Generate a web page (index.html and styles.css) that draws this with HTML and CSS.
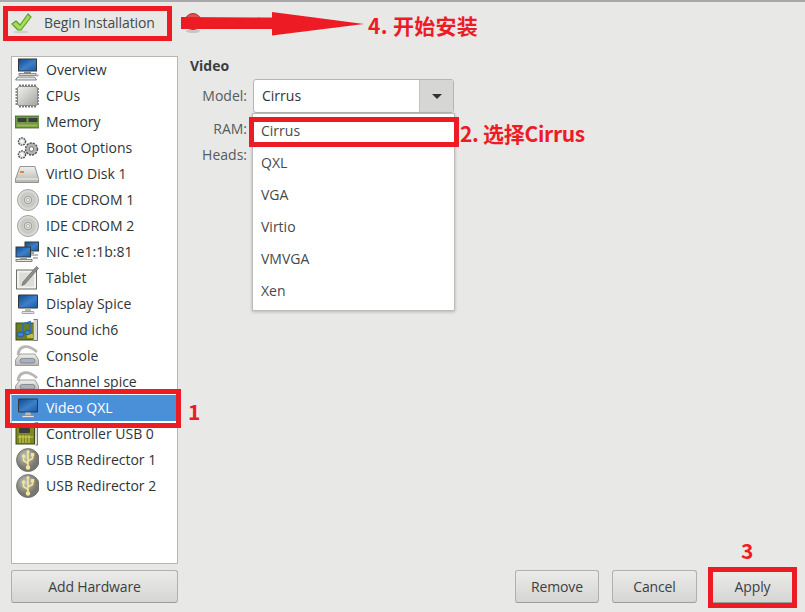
FILE: index.html
```html
<!DOCTYPE html>
<html lang="en">
<head>
<meta charset="utf-8">
<title>Video</title>
<link rel="stylesheet" href="styles.css">
</head>
<body>
<svg class="defs" aria-hidden="true">
  <defs>
    <linearGradient id="scr" x1="0" y1="0" x2="1" y2="1"><stop offset="0" stop-color="#0f4c94"/><stop offset=".55" stop-color="#3d7fc8"/><stop offset="1" stop-color="#1c5ca8"/></linearGradient>
    <linearGradient id="metal" x1="0" y1="0" x2="1" y2="1"><stop offset="0" stop-color="#f2f2f0"/><stop offset="1" stop-color="#a4a4a0"/></linearGradient>
    <linearGradient id="lite" x1="0" y1="0" x2="0" y2="1"><stop offset="0" stop-color="#f0f0ee"/><stop offset="1" stop-color="#b4b4b0"/></linearGradient>
    <radialGradient id="disc"><stop offset="0" stop-color="#f4f4f2"/><stop offset=".6" stop-color="#c4c4c0"/><stop offset="1" stop-color="#e6e6e4"/></radialGradient>
    <radialGradient id="ball" cx=".4" cy=".35"><stop offset="0" stop-color="#c8c8c4"/><stop offset="1" stop-color="#77776f"/></radialGradient>
    <symbol id="i-monitor" viewBox="0 0 24 24">
      <rect x="3" y="2.500" width="20" height="14" rx="1" fill="#33383a"/>
      <rect x="4" y="3.500" width="18" height="12" fill="url(#scr)"/>
      <path d="M10.500 16.500h5l.6 3h-6.200z" fill="#b8b8b4"/>
      <rect x="7" y="19.500" width="12" height="2" rx=".5" fill="#e4e4e2" stroke="#77777a" stroke-width=".6"/>
    </symbol>
    <symbol id="i-overview" viewBox="0 0 24 24">
      <rect x="3" y="0.500" width="19" height="13" fill="#33383a"/>
      <rect x="4" y="1.500" width="17" height="11" fill="url(#scr)"/>
      <path d="M9 13.500h7v2H9z" fill="#8c8c88"/>
      <rect x="4" y="15.500" width="17" height="2" fill="#d4d4d0" stroke="#55595a" stroke-width=".6"/>
      <path d="M2.500 19h17l2 3h-21z" fill="#e4e4e2" stroke="#55595a" stroke-width=".7"/>
      <path d="M21 16.500h2.500v2H21z" fill="#aaa"/>
    </symbol>
    <symbol id="i-cpu" viewBox="0 0 24 24">
      <path d="M5 .5v3M8 .5v3M11 .5v3M14 .5v3M17 .5v3M20 .5v3M5 20.500v3M8 20.500v3M11 20.500v3M14 20.500v3M17 20.500v3M20 20.500v3M.5 5h3M.5 8h3M.5 11h3M.5 14h3M.5 17h3M.5 20h3M21.500 5h2.500M21.500 8h2.500M21.500 11h2.500M21.500 14h2.500M21.500 17h2.500M21.500 20h2.500" stroke="#5f6364" stroke-width="1.700"/>
      <rect x="2.500" y="2.500" width="20" height="19" rx="2" fill="url(#metal)" stroke="#8a8a86"/>
    </symbol>
    <symbol id="i-mem" viewBox="0 0 24 24">
      <rect x="0.500" y="6" width="24" height="12" fill="#6d9a4a" stroke="#3f5f2e" stroke-width=".8"/>
      <rect x="2.500" y="8" width="9" height="4" fill="#3b3d3a"/>
      <rect x="13.500" y="8" width="9" height="4" fill="#3b3d3a"/>
      <path d="M2.500 15.500h20" stroke="#d7cc5c" stroke-width="2" stroke-dasharray="1 1"/>
    </symbol>
    <symbol id="i-gear" viewBox="0 0 24 24">
      <g fill="#e4e4e0" stroke="#4e5254" stroke-width="1.400">
        <circle cx="7" cy="5.500" r="3.600" stroke-dasharray="1.800 .8"/>
        <circle cx="7" cy="18.500" r="3.600" stroke-dasharray="1.800 .8"/>
        <circle cx="16.500" cy="13" r="6" fill="#b4b4b0" stroke-dasharray="2.200 1"/>
      </g>
      <circle cx="16.500" cy="13" r="2.200" fill="#fff" stroke="#4e5254" stroke-width=".7"/>
      <circle cx="7" cy="5.500" r="1.300" fill="#fff"/>
      <circle cx="7" cy="18.500" r="1.300" fill="#fff"/>
    </symbol>
    <symbol id="i-disk" viewBox="0 0 24 24">
      <path d="M5 4.500h15l3.500 12.500v3.500H.5V17z" fill="url(#lite)" stroke="#8a8a86" stroke-width=".9"/>
      <path d="M1 17h22.500" stroke="#fff" stroke-width=".8"/>
      <rect x="5" y="9" width="4" height="2" fill="#e8843a"/>
    </symbol>
    <symbol id="i-cd" viewBox="0 0 24 24">
      <circle cx="13" cy="12" r="10.500" fill="url(#disc)" stroke="#96968f" stroke-width=".9"/>
      <circle cx="13" cy="12" r="3.800" fill="#dcdcd8" stroke="#8a8a86" stroke-width=".8"/>
      <circle cx="13" cy="12" r="1.500" fill="#fff" stroke="#8a8a86" stroke-width=".6"/>
    </symbol>
    <symbol id="i-nic" viewBox="0 0 24 24">
      <rect x="10" y="2" width="13.500" height="9" fill="url(#scr)" stroke="#33383a"/>
      <path d="M14 11h5v3h-5z" fill="#a0a09c"/>
      <rect x="1" y="7" width="14.500" height="10" fill="url(#scr)" stroke="#33383a"/>
      <rect x="5" y="17" width="7" height="2" fill="#a0a09c"/>
      <rect x="1" y="19.500" width="16" height="2" fill="#e4e4e2" stroke="#55595a" stroke-width=".7"/>
      <path d="M16 15h7M18 18h5" stroke="#77777a"/>
    </symbol>
    <symbol id="i-tablet" viewBox="0 0 24 24">
      <rect x="1.500" y="4" width="20" height="19" fill="#f2f2f0" stroke="#6e6e6a"/>
      <rect x="4" y="6.500" width="15" height="14" fill="#dcdcd8"/>
      <path d="M21.500 .5l2 1.800L10 18l-3 1.400L8 16z" fill="#8e8e8a" stroke="#55595a" stroke-width=".6"/>
    </symbol>
    <symbol id="i-sound" viewBox="0 0 24 24">
      <rect x="1" y="5" width="17.500" height="17" fill="#6f7d22" stroke="#3f4a14"/>
      <path d="M18.500 1.500h4v21h-4" fill="#d8d8d4" stroke="#77777a"/>
      <rect x="12" y="16" width="6" height="4" fill="#c8b838"/>
      <path d="M8 16V6l7-2v10" fill="none" stroke="#2f6fc0" stroke-width="1.800"/>
      <ellipse cx="5.500" cy="16.500" rx="3.400" ry="2.400" fill="#3b82d0" stroke="#1c4f90" stroke-width=".7"/>
      <ellipse cx="12.500" cy="14.500" rx="3.200" ry="2.200" fill="#3b82d0" stroke="#1c4f90" stroke-width=".7"/>
    </symbol>
    <symbol id="i-serial" viewBox="0 0 24 24">
      <path d="M3 11C4 1 13 0 22 8" fill="none" stroke="#b6b6b2" stroke-width="2.800"/>
      <path d="M5 10h15l3.500 6v5.500H.5V16z" fill="url(#lite)" stroke="#8a8a86" stroke-width=".8"/>
      <rect x="5" y="14.500" width="15" height="4.500" rx="2.200" fill="#a8b2c2" stroke="#6a6a66" stroke-width=".6"/>
    </symbol>
    <symbol id="i-usbcard" viewBox="0 0 24 24">
      <path d="M19.500 0h3v23h-2" fill="#d8d8d4" stroke="#77777a"/>
      <rect x="1" y="4" width="18.500" height="18" fill="#7a8a1e" stroke="#3f4a14"/>
      <rect x="4" y="6" width="11" height="5" rx="1" fill="#3b3d3a"/>
      <path d="M3 15h15M5 13v8M8 13v8M11 13v8M14 13v8" stroke="#d7cc5c" stroke-width="1.100"/>
    </symbol>
    <symbol id="i-usb" viewBox="0 0 24 24">
      <circle cx="13" cy="12" r="11.500" fill="url(#ball)" stroke="#66665f" stroke-width=".7"/>
      <path d="M13 3v15M13 15.500l-4.500-3V9M13 13l4.500-2.500V7.500" fill="none" stroke="#f3e594" stroke-width="1.700"/>
      <path d="M13 1.500l2.200 3h-4.400z" fill="#f3e594"/>
      <circle cx="13" cy="19.500" r="2.200" fill="#f3e594"/>
      <circle cx="8.500" cy="8" r="1.700" fill="#f3e594"/>
      <rect x="15.800" y="5" width="3.400" height="3.400" fill="#f3e594"/>
    </symbol>
  </defs>
</svg>
<div class="window">
  <div class="toolbar">
    <div class="tool tool-begin">
      <svg class="tool-icon" viewBox="0 0 24 24"><ellipse cx="11" cy="22" rx="8" ry="1.500" fill="#cfcfcd"/><path d="M2 14l4-3 4 4 8-11 3 3-10 13H8z" fill="#a5dc5c" stroke="#5e9c2a" stroke-width="1.200" stroke-linejoin="round"/></svg>
      <span>Begin Installation</span>
    </div>
    <div class="tool tool-cancel">
      <svg class="tool-icon" viewBox="0 0 24 24"><ellipse cx="10" cy="21" rx="7" ry="2" fill="#c6c6c4"/><circle cx="10" cy="11.500" r="8" fill="#e0504e" stroke="#b03232"/></svg>
      <span>Cancel Installation</span>
    </div>
  </div>
  <div class="main">
    <div class="side">
      <ul class="list">
        <li class="row"><svg class="ic"><use href="#i-overview"/></svg>Overview</li>
        <li class="row"><svg class="ic"><use href="#i-cpu"/></svg>CPUs</li>
        <li class="row"><svg class="ic"><use href="#i-mem"/></svg>Memory</li>
        <li class="row"><svg class="ic"><use href="#i-gear"/></svg>Boot Options</li>
        <li class="row"><svg class="ic"><use href="#i-disk"/></svg>VirtIO Disk 1</li>
        <li class="row"><svg class="ic"><use href="#i-cd"/></svg>IDE CDROM 1</li>
        <li class="row"><svg class="ic"><use href="#i-cd"/></svg>IDE CDROM 2</li>
        <li class="row"><svg class="ic"><use href="#i-nic"/></svg>NIC :e1:1b:81</li>
        <li class="row"><svg class="ic"><use href="#i-tablet"/></svg>Tablet</li>
        <li class="row"><svg class="ic"><use href="#i-monitor"/></svg>Display Spice</li>
        <li class="row"><svg class="ic"><use href="#i-sound"/></svg>Sound ich6</li>
        <li class="row"><svg class="ic"><use href="#i-serial"/></svg>Console</li>
        <li class="row"><svg class="ic"><use href="#i-serial"/></svg>Channel spice</li>
        <li class="row sel"><svg class="ic"><use href="#i-monitor"/></svg>Video QXL</li>
        <li class="row"><svg class="ic"><use href="#i-usbcard"/></svg>Controller USB 0</li>
        <li class="row"><svg class="ic"><use href="#i-usb"/></svg>USB Redirector 1</li>
        <li class="row"><svg class="ic"><use href="#i-usb"/></svg>USB Redirector 2</li>
      </ul>
      <button class="btn btn-add">Add Hardware</button>
    </div>
    <div class="content">
      <div class="panel">
        <div class="title">Video</div>
        <div class="form">
          <div class="label label-model">Model:</div>
          <div class="combo">
            <div class="combo-value">Cirrus</div>
            <div class="combo-arrow"><span class="caret"></span></div>
          </div>
          <div class="label">RAM:</div>
          <div class="label">Heads:</div>
        </div>
        <ul class="popup">
          <li>Cirrus</li>
          <li>QXL</li>
          <li>VGA</li>
          <li>Virtio</li>
          <li>VMVGA</li>
          <li>Xen</li>
        </ul>
      </div>
      <div class="actions">
        <button class="btn btn-remove">Remove</button>
        <button class="btn btn-std">Cancel</button>
        <button class="btn btn-std">Apply</button>
      </div>
    </div>
  </div>
</div>
<div class="mark box-begin"></div>
<div class="mark box-video"></div>
<div class="mark box-cirrus"></div>
<div class="mark box-apply"></div>
<svg class="arrow" viewBox="0 0 184 24"><polygon points="0,5 91,5.500 91,0 183,12 91,23.500 91,17 0,17" fill="#ed1c24"/></svg>
<div class="note note-4">4. 开始安装</div>
<div class="note note-2">2. 选择Cirrus</div>
<div class="note note-1">1</div>
<div class="note note-3">3</div>
</body>
</html>
```
FILE: styles.css
```css
html, body { margin: 0; padding: 0; }
body { position: relative; width: 805px; height: 612px; overflow: hidden; background: #e8e8e7; font-family: "Open Sans", sans-serif; font-size: 14px; color: #2e3436; }
.defs { position: absolute; width: 0; height: 0; }
.window { display: flex; flex-direction: column; height: 612px; border-top: 2px solid #a8a8a8; box-sizing: border-box; }

.toolbar { height: 54px; display: flex; box-sizing: border-box; padding: 0 0 14px 10px; color: #454a4c; }
.tool { display: flex; align-items: center; }
.tool-begin { width: 171px; gap: 10px; letter-spacing: -.1px; }
.tool-cancel { gap: 10px; margin-left: 2px; color: #8a8d8d; }
.tool-icon { width: 24px; height: 24px; }

.main { display: flex; flex: 1; min-height: 0; padding: 0 10px 9px 11px; gap: 12px; }
.side { width: 167px; display: flex; flex-direction: column; gap: 6px; }
.list { flex: 1; margin: 0; padding: 0; list-style: none; background: #fff; border: 1px solid #b6b6b3; }
.row { height: 26px; display: flex; align-items: center; box-sizing: border-box; padding: 0 0 2px 3px; }
.sel { background: #4a90d9; color: #fff; }
.ic { width: 24px; height: 24px; margin: 0 7px 0 0; flex: none; position: relative; top: 1px; }

.content { flex: 1; min-width: 0; display: flex; flex-direction: column; }
.panel { flex: 1; position: relative; }
.title { font-weight: bold; line-height: 19px; margin-bottom: 4px; color: #3b4042; }
.form { display: grid; grid-template-columns: 57px 201px; grid-template-rows: 37px 26px 26px; column-gap: 6px; }
.label { grid-column: 1; text-align: right; line-height: 26px; color: #575b5c; }
.label-model { line-height: 33px; }
.combo { grid-column: 2; grid-row: 1; height: 34px; box-sizing: border-box; display: flex; border: 1px solid #b5b5b2; border-radius: 3px; overflow: hidden; background: #fff; }
.combo-value { flex: 1; padding-left: 8px; line-height: 32px; }
.combo-arrow { width: 33px; background: #d6d6d4; border-left: 1px solid #c2c2bf; display: flex; align-items: center; justify-content: center; }
.caret { width: 0; height: 0; border-style: solid; border-width: 5px 5px 0; border-color: #2e3436 transparent transparent; }
.popup { position: absolute; left: 62px; top: 57px; width: 201px; margin: 0; padding: 2px 0; list-style: none; background: #fff; border: 1px solid #bcbcb9; box-shadow: 0 1px 3px rgba(0,0,0,.22); color: #454a4c; }
.popup li { height: 32px; line-height: 30px; padding-left: 8px; }

.actions { display: flex; justify-content: flex-end; gap: 13px; }
.btn { height: 33px; padding: 0; font: inherit; letter-spacing: -.15px; color: #3b4042; border: 1px solid #b0b0ad; border-bottom-color: #9c9c99; border-radius: 3px; background: linear-gradient(#ebebe9, #d5d5d3); }
.btn-add { width: 167px; flex: none; }
.btn-remove { width: 84px; }
.btn-std { width: 85px; }

.mark { position: absolute; box-sizing: border-box; border: 5px solid #ed1c24; }
.box-begin { left: 3px; top: 6px; width: 169px; height: 35px; }
.box-video { left: 5px; top: 389px; width: 176px; height: 39px; }
.box-cirrus { left: 249px; top: 117px; width: 210px; height: 30px; }
.box-apply { left: 708px; top: 567px; width: 89px; height: 41px; }
.arrow { position: absolute; left: 181px; top: 12px; width: 184px; height: 24px; }
.note { position: absolute; font: bold 21px/26px "Noto Sans CJK SC", sans-serif; color: #ed1c24; white-space: nowrap; }
.note-4 { left: 368px; top: 12px; letter-spacing: .3px; }
.note-2 { left: 460px; top: 120px; letter-spacing: -.3px; }
.note-1 { left: 188px; top: 398px; }
.note-3 { left: 741px; top: 537px; }
```
